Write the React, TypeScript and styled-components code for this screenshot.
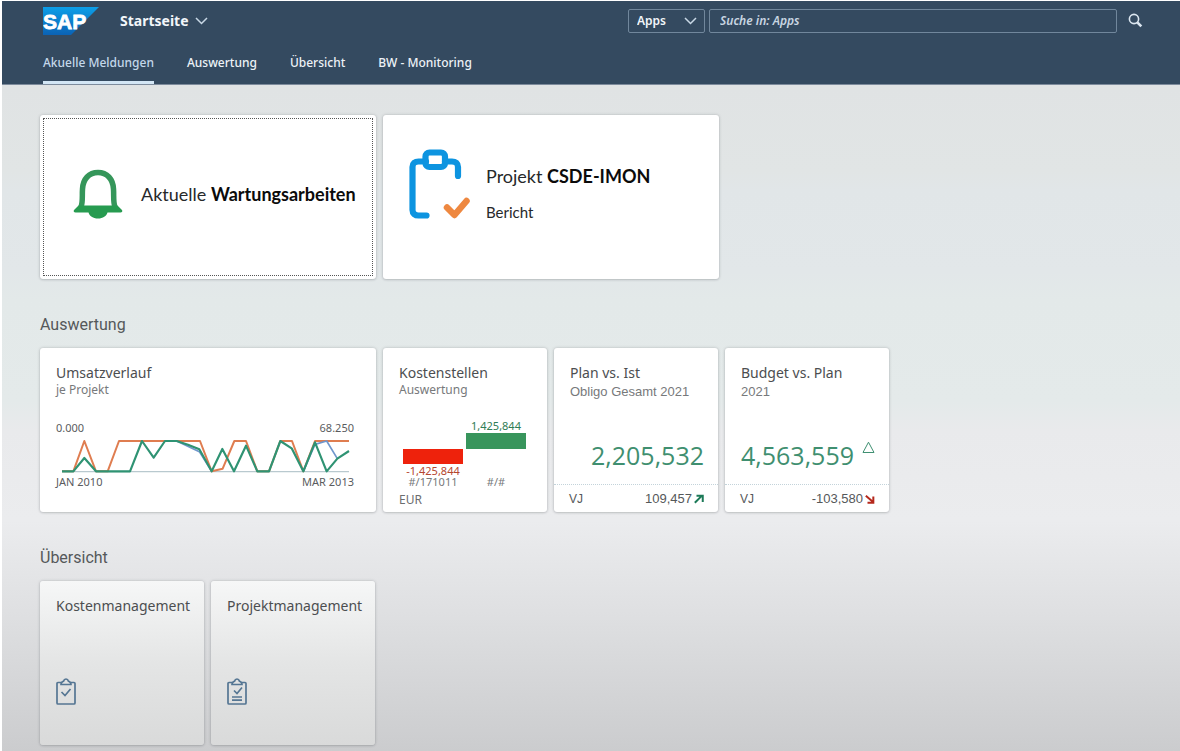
import React from "react";
import styled, { createGlobalStyle } from "styled-components";

const ui = `"Noto Sans", "Open Sans", sans-serif`;
const plain = `"Liberation Sans", Arial, sans-serif`;
const news = `Lato, "Open Sans", sans-serif`;

const GlobalStyle = createGlobalStyle`
  *, *::before, *::after { box-sizing: border-box; }
  html { min-height: 100%; background: #fff; }
  body {
    margin: 0;
    padding: 1px 0 0 2px;
    font-family: ${ui};
    font-size: 14px;
    color: #4c4e50;
  }
  a { color: inherit; text-decoration: none; }
`;

const Page = styled.div`
  min-height: calc(100vh - 1px);
  background: linear-gradient(180deg, #e0e3e4 85px, #e1e5e5 170px, #e1e6e8 190px, #e2e7e9 270px, #e3e9e9 300px, #e4eaea 400px, #e9eaec 430px, #ebecee 520px, #dfe0e2 610px, #cbccce 750px);
`;

const Header = styled.header`
  background: #344a60;
  color: #f2f6fa;
  border-bottom: 1px solid #7d8b9c;
`;

const ShellBar = styled.div`
  display: flex;
  align-items: center;
  height: 39px;
  padding: 0 37px 0 41px;
`;

const LogoLink = styled.a`
  display: flex;
  margin-right: 21px;
`;

const TitleButton = styled.button`
  display: flex;
  align-items: center;
  gap: 6px;
  padding: 0;
  border: 0;
  background: none;
  color: inherit;
  font: 700 14px/20px ${ui};
`;

const SearchForm = styled.form`
  display: flex;
  align-items: center;
  flex: 0 1 calc(50% - 35px);
  min-width: 0;
  margin-left: auto;
`;

const ScopeBox = styled.div`
  display: grid;
  grid-template-columns: 1fr;
  align-items: center;
  width: 77px;
  margin-right: 4px;
  & > * { grid-area: 1 / 1; }
  & > svg { justify-self: end; margin-right: 8px; pointer-events: none; }
`;

const Scope = styled.select`
  appearance: none;
  width: 100%;
  height: 24px;
  padding: 0 8px;
  border: 1px solid #71879c;
  border-radius: 2px;
  background: transparent;
  color: #f2f6fa;
  font: 600 12px/20px ${ui};
`;

const SearchInput = styled.input`
  flex: 1;
  min-width: 0;
  height: 24px;
  padding: 0 10px;
  border: 1px solid #71879c;
  border-radius: 2px;
  background: transparent;
  color: #f2f6fa;
  font: italic 600 12px/20px ${ui};
  &::placeholder { color: #c9d6e2; opacity: 1; }
`;

const SearchButton = styled.button`
  display: flex;
  margin-left: 11px;
  padding: 0;
  border: 0;
  background: none;
  color: #dbe6f0;
`;

const Nav = styled.nav`
  display: flex;
  gap: 33px;
  padding: 0 41px;
`;

const Tab = styled.a<{ $active?: boolean }>`
  height: 44px;
  padding-top: 13px;
  border-bottom: 3px solid ${(p) => (p.$active ? "#d3e6f5" : "transparent")};
  color: ${(p) => (p.$active ? "#c4d8ea" : "#edf2f7")};
  font-size: 12px;
  font-weight: 500;
  line-height: 20px;
  white-space: nowrap;
`;

const Main = styled.main`
  display: flex;
  flex-direction: column;
  gap: 33px;
  padding: 30px 38px 5px;
`;

const Section = styled.section`
  display: flex;
  flex-direction: column;
  gap: 10px;
`;

const SectionTitle = styled.h2`
  margin: 0;
  font: 400 16px/26px Roboto, ${ui};
  color: #55585a;
`;

const Tiles = styled.div`
  display: flex;
  flex-wrap: wrap;
  gap: 7px;
`;

const Tile = styled.a<{ $wide?: boolean; $shaded?: boolean }>`
  display: flex;
  flex-direction: column;
  width: ${(p) => (p.$wide ? 336 : 164)}px;
  height: 164px;
  padding: 15px 16px 0;
  border-radius: 3px;
  background: ${(p) => (p.$shaded ? "linear-gradient(#f6f7f7, #e4e5e5 50%, #d9dada)" : "#fff")};
  box-shadow: 0 0 3px rgba(70, 75, 80, 0.3), 0 1px 2px rgba(70, 75, 80, 0.15);
`;

const NewsTile = styled(Tile)<{ $focused?: boolean }>`
  flex-direction: row;
  align-items: center;
  padding: 0 16px 6px 33px;
  gap: 18px;
  outline: ${(p) => (p.$focused ? "1px dotted #555" : "none")};
  outline-offset: -4px;
  font-family: ${news};
  color: #26282a;
`;

const ReportTile = styled(NewsTile)`
  align-items: flex-start;
  gap: 15px;
  padding: 34px 16px 0 26px;
`;

const NewsText = styled.span`
  display: flex;
  flex-direction: column;
  gap: 12px;
  padding-top: 13px;
`;

const NewsTitle = styled.span`
  font-size: 18px;
  line-height: 28px;
  white-space: nowrap;
  & > strong { color: #0b0b0b; }
`;

const NewsSub = styled.span`
  font-size: 15px;
  line-height: 20px;
`;

const TileTitle = styled.h3`
  margin: 0;
  font: 400 14px/20px ${ui};
  color: #4c4e50;
  white-space: nowrap;
`;

const TileSub = styled.p<{ $plain?: boolean }>`
  margin: 0;
  padding-top: ${(p) => (p.$plain ? 1 : 0)}px;
  font: 400 ${(p) => (p.$plain ? `13px/16px ${plain}` : `12px/14px ${ui}`)};
  color: #77797b;
  white-space: nowrap;
`;

const ChartLabels = styled.div`
  display: flex;
  justify-content: space-between;
  margin-right: 6px;
  font-size: 11px;
  line-height: 14px;
  color: #5a5c5e;
`;

const TrendChart = styled.div`
  display: flex;
  flex-direction: column;
  margin-top: 24px;
  & > svg { margin: 3px 0 1px 4px; }
`;

const BarChart = styled.div`
  display: grid;
  grid-template-columns: 60px 60px;
  column-gap: 3px;
  margin: 23px 0 0 4px;
  font-size: 11px;
  line-height: 11px;
  text-align: center;
  color: #77797b;
`;

const BarColumn = styled.div<{ $negative?: boolean }>`
  display: flex;
  flex-direction: column;
  height: 56px;
  padding-top: ${(p) => (p.$negative ? 29 : 0)}px;
  gap: ${(p) => (p.$negative ? 1 : 2)}px;
  color: ${(p) => (p.$negative ? "#b5462f" : "#2f7d55")};
`;

const Bar = styled.span<{ $negative?: boolean }>`
  height: ${(p) => (p.$negative ? 15 : 16)}px;
  background: ${(p) => (p.$negative ? "#ee220c" : "#38955c")};
`;

const Unit = styled.span`
  margin-top: 5px;
  font-size: 12px;
  line-height: 16px;
  color: #6b6d6f;
`;

const Kpi = styled.div`
  display: flex;
  justify-content: flex-end;
  gap: 8px;
  margin: auto -2px 0 0;
  padding-bottom: 13px;
  font: 400 25px/32px "Open Sans", sans-serif;
  color: #3f8f70;
  & > svg { margin-top: 2px; }
`;

const KpiFooter = styled.div`
  display: flex;
  align-items: center;
  justify-content: space-between;
  height: 28px;
  margin: 0 -16px;
  padding: 0 14px 0 15px;
  border-top: 1px dotted #c3d3da;
  font-family: ${plain};
  font-size: 12px;
  color: #55585a;
`;

const Delta = styled.span`
  display: flex;
  align-items: center;
  gap: 2px;
  font-size: 13px;
`;

const IconSlot = styled.span`
  display: flex;
  margin-top: auto;
  padding-bottom: 40px;
`;

const Chevron = () => (
  <svg width="13" height="8" viewBox="0 0 13 8" fill="none" stroke="#c9d8e6" strokeWidth="1.5" aria-hidden="true">
    <path d="M1 1l5.500 5.500L12 1" />
  </svg>
);

const Logo = () => (
  <svg width="56" height="28" viewBox="0 0 56 28" role="img" aria-label="SAP">
    <defs>
      <linearGradient id="sapBlue" x1="0" y1="0" x2="0" y2="1">
        <stop offset="0" stopColor="#0c9fe8" />
        <stop offset="1" stopColor="#0b62b4" />
      </linearGradient>
    </defs>
    <path d="M0 0h56L28 28H0z" fill="url(#sapBlue)" />
    <text x="0" y="22" fill="#fff" stroke="#fff" strokeWidth="0.8" fontFamily="Liberation Sans, Arial, sans-serif" fontWeight="700" fontSize="21">
      SAP
    </text>
  </svg>
);

const Magnifier = () => (
  <svg width="15" height="15" viewBox="0 0 15 15" fill="none" stroke="currentColor" aria-hidden="true">
    <circle cx="6" cy="6" r="4.600" strokeWidth="1.600" />
    <path d="M9.300 9.300l4 4" strokeWidth="2.600" />
  </svg>
);

const Bell = () => (
  <svg width="50" height="50" viewBox="0 0 50 50" aria-hidden="true">
    <path
      d="M8 38c2-5 1-11 1.500-18C10 10 16 3.500 25 3.500S40 10 40.500 20c.5 7-.5 13 1.500 18"
      fill="none"
      stroke="#35965a"
      strokeWidth="5.500"
    />
    <path d="M5.500 36.500h39l4.500 4.500c.8 1.500 0 2.500-1.500 2.500h-13C33.500 47 30 49.500 25 49.500S16.500 47 15.500 43.500h-13C1 43.500.2 42.500 1 41z" fill="#279b50" />
  </svg>
);

const ReportIcon = () => (
  <svg width="62" height="70" viewBox="0 0 62 70" fill="none" strokeLinecap="round" strokeLinejoin="round" aria-hidden="true">
    <g stroke="#0d94e0" strokeWidth="6.200">
      <path d="M17 12.500H9.500c-3.500 0-6 2-6 5.500v43c0 3.500 2.500 5.500 6 5.500h8M36 12.500h7c3.500 0 6 2 6 5.500v9" />
      <path d="M20.500 3.500h11.500c2.300 0 4 1.700 4 4v6.500c0 2.300-1.700 4-4 4H20.500c-2.300 0-4-1.700-4-4V7.500c0-2.300 1.700-4 4-4z" />
    </g>
    <path d="M38 58.500l7.500 7.500L57.500 52" stroke="#ee8840" strokeWidth="6.500" />
  </svg>
);

const Trend = () => (
  <svg width="292" height="36" viewBox="90 383 876 108" fill="none" strokeLinejoin="round" aria-hidden="true">
    <path d="M96 484H957" stroke="#b9c9cf" strokeWidth="4" />
    <path
      d="M96 483H130L163 392L198 483H233L267 392H510L545 483L578 475L613 392H648L682 483H717L751 392H786L820 483L855 392H957"
      stroke="#df7d50"
      strokeWidth="6"
    />
    <path d="M440 392L508 424L545 483M820 483L855 402L890 392L922 445" stroke="#6f96cc" strokeWidth="5" />
    <path
      d="M96 483H130L163 443L198 483H300L336 392L371 442L405 392H440L474 403L508 417L545 483L577 416L612 483L648 406L682 483H717L751 392L785 414L820 483L855 396L890 483L922 445L957 422"
      stroke="#2f9373"
      strokeWidth="6.500"
    />
  </svg>
);

const Arrow = ({ down }: { down?: boolean }) => (
  <svg width="10" height="10" viewBox="0 0 12 12" fill="none" stroke={down ? "#b5281c" : "#1c7a58"} strokeWidth="2.400" role="img" aria-label={down ? "down" : "up"}>
    {down ? <path d="M1 2l8 7M10 3v7.500H3" /> : <path d="M1 10.500l8-8M3 2h7.500v7.500" />}
  </svg>
);

const Triangle = () => (
  <svg width="13" height="12" viewBox="0 0 13 12" fill="none" stroke="#3d8f70" aria-hidden="true">
    <path d="M6.500 1.200L12 11.500H1z" />
  </svg>
);

const Clipboard = ({ lines }: { lines?: boolean }) => (
  <svg width="20" height="27" viewBox="0 0 20 27" fill="none" stroke="#557693" strokeWidth="1.700" aria-hidden="true">
    <path d="M5 4.500H2c-.7 0-1 .4-1 1V25c0 .7.4 1 1 1h16c.7 0 1-.4 1-1V5.500c0-.6-.3-1-1-1h-3" />
    <path d="M5 6.500C5 4 6.500 3.500 7.500 3.200 8 1.500 9 1 10 1s2 .5 2.500 2.200C13.500 3.500 15 4 15 6.500z" />
    {lines ? <path d="M7 12.500l3 3 5-6M5 19h10M5 22.200h10" /> : <path d="M5.500 14l3.500 3.500L14.500 11" />}
  </svg>
);

export default function App() {
  return (
    <>
      <GlobalStyle />
      <Page>
        <Header>
          <ShellBar>
            <LogoLink href="#home">
              <Logo />
            </LogoLink>
            <TitleButton type="button">
              Startseite
              <Chevron />
            </TitleButton>
            <SearchForm role="search">
              <ScopeBox>
                <Scope aria-label="Suchbereich">
                  <option>Apps</option>
                </Scope>
                <Chevron />
              </ScopeBox>
              <SearchInput type="text" aria-label="Suche in: Apps" placeholder="Suche in: Apps" />
              <SearchButton type="button" aria-label="Suchen">
                <Magnifier />
              </SearchButton>
            </SearchForm>
          </ShellBar>
          <Nav>
            <Tab href="#meldungen" $active>Akuelle Meldungen</Tab>
            <Tab href="#auswertung">Auswertung</Tab>
            <Tab href="#uebersicht">Übersicht</Tab>
            <Tab href="#monitoring">BW - Monitoring</Tab>
          </Nav>
        </Header>
        <Main>
          <Tiles>
            <NewsTile href="#wartung" $wide $focused>
              <Bell />
              <NewsTitle>
                Aktuelle <strong>Wartungsarbeiten</strong>
              </NewsTitle>
            </NewsTile>
            <ReportTile href="#imon" $wide>
              <ReportIcon />
              <NewsText>
                <NewsTitle>
                  Projekt <strong>CSDE-IMON</strong>
                </NewsTitle>
                <NewsSub>Bericht</NewsSub>
              </NewsText>
            </ReportTile>
          </Tiles>
          <Section id="auswertung">
            <SectionTitle>Auswertung</SectionTitle>
            <Tiles>
              <Tile href="#umsatz" $wide>
                <TileTitle>Umsatzverlauf</TileTitle>
                <TileSub>je Projekt</TileSub>
                <TrendChart>
                  <ChartLabels>
                    <span>0.000</span>
                    <span>68.250</span>
                  </ChartLabels>
                  <Trend />
                  <ChartLabels>
                    <span>JAN 2010</span>
                    <span>MAR 2013</span>
                  </ChartLabels>
                </TrendChart>
              </Tile>
              <Tile href="#kostenstellen">
                <TileTitle>Kostenstellen</TileTitle>
                <TileSub>Auswertung</TileSub>
                <BarChart>
                  <BarColumn $negative>
                    <Bar $negative />
                    -1,425,844
                  </BarColumn>
                  <BarColumn>
                    1,425,844
                    <Bar />
                  </BarColumn>
                  <span>#/171011</span>
                  <span>#/#</span>
                </BarChart>
                <Unit>EUR</Unit>
              </Tile>
              <Tile href="#ist">
                <TileTitle>Plan vs. Ist</TileTitle>
                <TileSub $plain>Obligo Gesamt 2021</TileSub>
                <Kpi>2,205,532</Kpi>
                <KpiFooter>
                  VJ
                  <Delta>
                    109,457
                    <Arrow />
                  </Delta>
                </KpiFooter>
              </Tile>
              <Tile href="#budget">
                <TileTitle>Budget vs. Plan</TileTitle>
                <TileSub $plain>2021</TileSub>
                <Kpi>
                  4,563,559
                  <Triangle />
                </Kpi>
                <KpiFooter>
                  VJ
                  <Delta>
                    -103,580
                    <Arrow down />
                  </Delta>
                </KpiFooter>
              </Tile>
            </Tiles>
          </Section>
          <Section id="uebersicht">
            <SectionTitle>Übersicht</SectionTitle>
            <Tiles>
              <Tile href="#kosten" $shaded>
                <TileTitle>Kostenmanagement</TileTitle>
                <IconSlot>
                  <Clipboard />
                </IconSlot>
              </Tile>
              <Tile href="#projekt" $shaded>
                <TileTitle>Projektmanagement</TileTitle>
                <IconSlot>
                  <Clipboard lines />
                </IconSlot>
              </Tile>
            </Tiles>
          </Section>
        </Main>
      </Page>
    </>
  );
}
